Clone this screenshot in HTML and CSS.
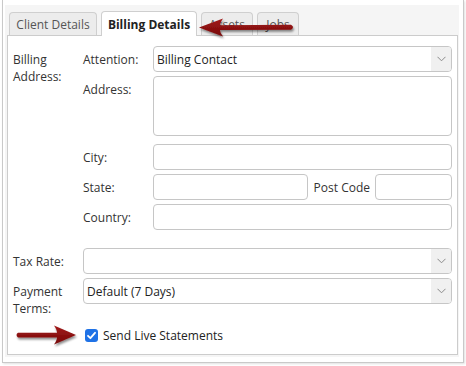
FILE: index.html
```html
<!DOCTYPE html>
<html>
<head>
<meta charset="utf-8">
<link rel="stylesheet" href="styles.css">
</head>
<body>
<div class="frame">
  <div class="widget">
    <div class="tabs">
      <div class="tab tab-client">Client Details</div>
      <div class="tab tab-billing active">Billing Details</div>
      <div class="tab tab-assets">Assets</div>
      <div class="tab tab-jobs">Jobs</div>
    </div>
    <div class="panel">
      <div class="lbl lbl-main">Billing<br>Address:</div>

      <div class="lbl sub">Attention:</div>
      <div class="ctl select"><span class="val">Billing Contact</span><span class="chev"><svg width="9" height="6" viewBox="0 0 9 6"><path d="M0.5 0.8 L4.5 4.8 L8.5 0.8" fill="none" stroke="#8a8a8a" stroke-width="1"/></svg></span></div>

      <div class="lbl sub">Address:</div>
      <div class="ctl area"></div>

      <div class="lbl sub city">City:</div>
      <div class="ctl input city"></div>

      <div class="lbl sub">State:</div>
      <div class="ctl state-row">
        <div class="input state"></div>
        <span class="pc-lbl">Post Code</span>
        <div class="input postcode"></div>
      </div>

      <div class="lbl sub">Country:</div>
      <div class="ctl input"></div>

      <div class="lbl first tax">Tax Rate:</div>
      <div class="ctl2 select tax"><span class="val"></span><span class="chev"><svg width="9" height="6" viewBox="0 0 9 6"><path d="M0.5 0.8 L4.5 4.8 L8.5 0.8" fill="none" stroke="#8a8a8a" stroke-width="1"/></svg></span></div>

      <div class="lbl first">Payment<br>Terms:</div>
      <div class="ctl2 select"><span class="val">Default (7 Days)</span><span class="chev"><svg width="9" height="6" viewBox="0 0 9 6"><path d="M0.5 0.8 L4.5 4.8 L8.5 0.8" fill="none" stroke="#8a8a8a" stroke-width="1"/></svg></span></div>

      <label class="check-row">
        <span class="cb"><svg width="13" height="13" viewBox="0 0 13 13"><path d="M3 6.8 L5.4 9.2 L10 3.8" fill="none" stroke="#fff" stroke-width="1.8" stroke-linecap="round" stroke-linejoin="round"/></svg></span>
        <span>Send Live Statements</span>
      </label>
    </div>
  </div>
</div>

<svg class="arrows" width="466" height="366" viewBox="0 0 466 366">
  <defs>
    <linearGradient id="ar" x1="0" y1="0" x2="0" y2="1">
      <stop offset="0" stop-color="#a31b1b"/>
      <stop offset="1" stop-color="#760808"/>
    </linearGradient>
    <filter id="sh" x="-20%" y="-50%" width="140%" height="200%">
      <feDropShadow dx="1" dy="2" stdDeviation="1.2" flood-color="#000" flood-opacity="0.45"/>
    </filter>
  </defs>
  <path filter="url(#sh)" fill="url(#ar)" d="M199,27.5 L223,18.5 Q220,23 220,25.3 L291,24.8 Q295,27 291,29.8 L220,30 Q220,32.5 223,36.5 Z"/>
  <path filter="url(#sh)" fill="url(#ar)" d="M76,335 L54,325.5 Q57,330 57,332.8 L18,332.8 Q15,335 18,337.4 L57,337.4 Q57,340 54,344.5 Z"/>
</svg>
</body>
</html>
```
FILE: styles.css
```css
* { box-sizing: border-box; }

body {
  margin: 0;
  width: 466px;
  height: 366px;
  overflow: hidden;
  position: relative;
  background: #fff;
  font-family: "Open Sans", "DejaVu Sans", sans-serif;
  font-size: 12px;
  color: #333;
}

.frame {
  margin-left: 2px;
  width: 462px;
  height: 363px;
  border: 1px solid #c9c9c9;
  border-top: none;
  padding: 5px 4px 5px 2px;
  box-shadow: 1px 1px 2px rgba(0,0,0,0.12);
}

.widget {
  height: 100%;
  background: #f5f5f5;
  padding: 6px 1px 5px 2px;
  display: flex;
  flex-direction: column;
}

.tabs {
  display: flex;
  align-items: flex-end;
  gap: 4px;
  height: 24px;
  padding-left: 2px;
  position: relative;
  z-index: 1;
}

.tab {
  height: 23px;
  border: 1px solid #cfcfcf;
  border-bottom: none;
  border-radius: 4px 4px 0 0;
  background: #ececec;
  color: #555;
  display: flex;
  align-items: center;
  justify-content: center;
  padding-top: 1px;
}
.tab-client { width: 88px; }
.tab-billing { width: 96px; }
.tab-assets { width: 52px; }
.tab-jobs { width: 42px; }

.tab.active {
  height: 25px;
  margin-bottom: -1px;
  background: #fff;
  font-weight: bold;
  color: #222;
}

.panel {
  flex: 1;
  background: #fff;
  border: 1px solid #cccccc;
  padding: 10px 5px;
  display: grid;
  grid-template-columns: 70px 70px 1fr;
  row-gap: 4px;
  align-content: start;
}

.lbl {
  padding-top: 5px;
  line-height: 17px;
  color: #333;
}
.lbl-main { grid-column: 1; grid-row: 1 / 6; }
.sub { grid-column: 2; }
.first { grid-column: 1; }
.ctl { grid-column: 3; }
.ctl2 { grid-column: 2 / 4; }

.city { margin-top: 4px; }
.tax { margin-top: 14px; }

.input, .select, .area {
  height: 26px;
  border: 1px solid #c6c6c6;
  border-radius: 4px;
  background: #fff;
}
.area { height: 60px; }

.select {
  display: flex;
  align-items: center;
  overflow: hidden;
  color: #222;
}
.select .val {
  flex: 1;
  padding-left: 3px;
}
.chev {
  width: 20px;
  align-self: stretch;
  background: #f0f0f0;
  display: flex;
  align-items: center;
  justify-content: center;
  padding-left: 1px;
}

.state-row {
  display: flex;
  align-items: center;
}
.state { flex: 1; }
.pc-lbl { margin: 0 5px 0 6px; }
.postcode { width: 77px; }

.check-row {
  grid-column: 2 / 4;
  margin-top: 6px;
  display: flex;
  align-items: center;
  gap: 5px;
  line-height: 17px;
  padding-left: 2px;
  color: #222;
}
.cb {
  width: 13px;
  height: 13px;
  border-radius: 3px;
  background: #1f72e6;
  display: flex;
}

.arrows {
  position: absolute;
  top: 0;
  left: 0;
  z-index: 5;
  pointer-events: none;
}
```
